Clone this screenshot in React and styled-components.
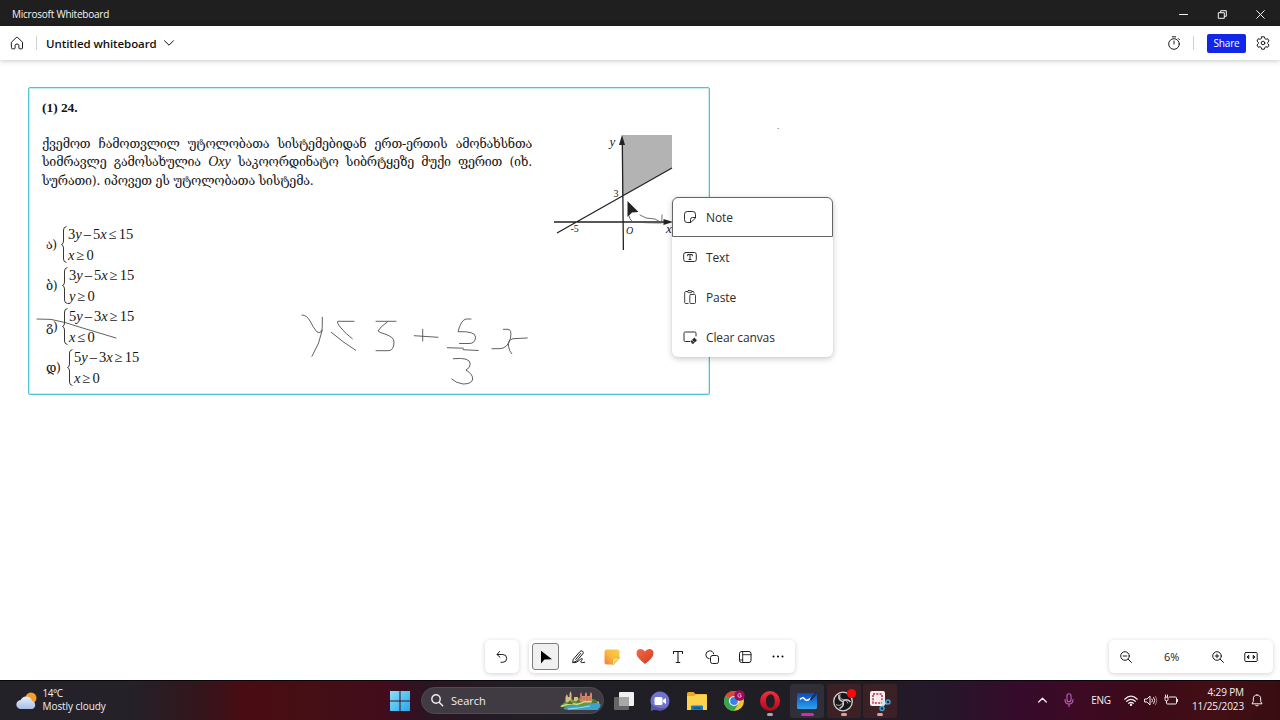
import React from "react";
import styled, { createGlobalStyle } from "styled-components";

const GlobalStyle = createGlobalStyle`
  * { box-sizing: border-box; }
  html, body { margin: 0; padding: 0; overflow: hidden; }
  body { font-family: "Open Sans", "Noto Sans", sans-serif; color: #1b1b1b; background: #fff; }
  svg { display: block; flex: none; overflow: visible; }
  button { font: inherit; color: inherit; border: 0; padding: 0; background: none; }
`;

const Screen = styled.div`
  width: 1280px;
  height: 720px;
  display: grid;
  grid-template-rows: 26px 34px 620px 40px;
  overflow: hidden;
`;

const Label = styled.span`
  white-space: nowrap;
  font-size: ${(p) => p.$size}px;
  letter-spacing: ${(p) => p.$track || 0}px;
  font-weight: ${(p) => p.$weight || 400};
`;

/* ---------- window title bar ---------- */
const TitleBar = styled.header`
  background: #1f1f1f;
  color: #f4f4f4;
  display: flex;
  align-items: center;
  justify-content: space-between;
  padding: 2px 0 0 12px;
`;
const WindowButtons = styled.div`
  display: flex;
`;
const WindowButton = styled.button`
  width: 38.5px;
  height: 24px;
  display: flex;
  align-items: center;
  justify-content: center;
`;

/* ---------- app header ---------- */
const AppHeader = styled.nav`
  position: relative;
  z-index: 1;
  background: #fff;
  display: flex;
  align-items: center;
  padding: 0 10px;
  box-shadow: 0 1px 5px rgba(0, 0, 0, 0.22);
`;
const Separator = styled.i`
  width: 1px;
  height: 14px;
  background: #d0d0d0;
  margin: 0 ${(p) => p.$right}px 0 ${(p) => p.$left}px;
`;
const BoardName = styled.div`
  display: flex;
  align-items: center;
  gap: 7px;
  color: #111;
  flex: 1;
`;
const ShareButton = styled.button`
  width: 39px;
  height: 19px;
  margin-right: 10px;
  border-radius: 2px;
  background: #1226e8;
  color: #fff;
  display: flex;
  align-items: center;
  justify-content: center;
`;

/* ---------- canvas ---------- */
const Canvas = styled.main`
  position: relative;
  background: #fff;
  overflow: hidden;
`;
const Worksheet = styled.article`
  position: absolute;
  left: 28px;
  top: 27px;
  width: 682px;
  height: 308px;
  border: 1px solid #50c3d6;
  box-shadow: inset 0 0 0 0.5px #8fdbe6;
  border-radius: 2px;
  padding: 12px 13px;
  display: grid;
  grid-template-columns: 490px 1fr;
  column-gap: 18px;
  color: #151515;
  font-family: "Liberation Serif", "DejaVu Serif", serif;
`;
const Problem = styled.section`
  display: flex;
  flex-direction: column;
`;
const ProblemNumber = styled.h1`
  margin: 0 0 19px;
  font-size: 13.5px;
  line-height: 16px;
  font-weight: 700;
  letter-spacing: -0.05px;
`;
const ProblemLine = styled.p`
  margin: 0;
  height: 18.4px;
  line-height: 18.4px;
  font-family: "DejaVu Serif", serif;
  font-size: 12.5px;
  letter-spacing: -0.22px;
  white-space: nowrap;
  text-align-last: ${(p) => (p.$last ? "left" : "justify")};
  em { font-family: "Liberation Serif", serif; font-size: 14px; letter-spacing: 0; }
`;
const Options = styled.div`
  margin-top: 34px;
  display: flex;
  flex-direction: column;
`;
const Option = styled.div`
  height: 41px;
  display: flex;
  align-items: center;
  padding-left: 4px;
`;
const OptionKey = styled.span`
  width: ${(p) => p.$width}px;
  font-family: "DejaVu Serif", serif;
  font-size: 12.5px;
  letter-spacing: -0.4px;
`;
const Equations = styled.div`
  display: flex;
  flex-direction: column;
  margin-left: 1px;
  font-size: 14.5px;
  line-height: 20.5px;
  white-space: nowrap;
`;
const Equation = styled.span`
  word-spacing: -1.6px;
`;
const Figure = styled.figure`
  margin: 0;
  padding-top: 28px;
`;
const Ink = styled.svg`
  position: absolute;
  left: 0;
  top: 0;
  pointer-events: none;
`;
const ContextMenu = styled.ul`
  position: absolute;
  left: 672px;
  top: 137px;
  width: 161px;
  margin: 0;
  padding: 0;
  list-style: none;
  background: #fff;
  border-radius: 6px;
  box-shadow: 0 2px 6px rgba(0, 0, 0, 0.2), 0 0 2px rgba(0, 0, 0, 0.1);
`;
const MenuItem = styled.li`
  height: 40px;
  display: flex;
  align-items: center;
  gap: 9px;
  padding-left: 10px;
  color: #2c2c2c;
  border: 1px solid ${(p) => (p.$focused ? "#666" : "transparent")};
  border-radius: ${(p) => (p.$focused ? "6px 6px 0 0" : "0")};
`;
const FloatingBar = styled.div`
  position: absolute;
  left: ${(p) => p.$left}px;
  top: 580px;
  width: ${(p) => p.$width}px;
  height: 33px;
  display: flex;
  align-items: center;
  background: #fff;
  border-radius: 5px;
  box-shadow: 0 1px 5px rgba(0, 0, 0, 0.18);
`;
const Tool = styled.button`
  width: ${(p) => p.$width || 33.2}px;
  height: 33px;
  display: flex;
  align-items: center;
  justify-content: center;
`;
const ActiveTool = styled.span`
  width: 27px;
  height: 27px;
  display: flex;
  align-items: center;
  justify-content: center;
  border: 1px solid #7c7c7c;
  border-radius: 3px;
  background: #f0f0f0;
`;

/* ---------- taskbar ---------- */
const Taskbar = styled.footer`
  display: flex;
  align-items: center;
  border-top: 1px solid #09070a;
  color: #f2eef0;
  background: linear-gradient(90deg, #242229 0, #242128 130px, #34151c 200px, #490c12 245px,
    #450f14 310px, #420c1d 385px, #2a1522 430px, #211e26 520px, #201e25 850px,
    #25172a 940px, #360b2b 1020px, #3d0a23 1080px, #3c0b18 1150px, #430f15 1210px, #380d12 1280px);
`;
const Weather = styled.div`
  width: 382px;
  padding-left: 16px;
  display: flex;
  align-items: center;
  gap: 4.5px;
`;
const Stack = styled.div`
  display: flex;
  flex-direction: column;
  align-items: ${(p) => p.$align || "flex-start"};
  line-height: 13.5px;
  margin-top: -1px;
  width: ${(p) => (p.$width ? p.$width + "px" : "auto")};
`;
const TaskIcon = styled.div`
  position: relative;
  width: ${(p) => p.$width || 36.67}px;
  height: 39px;
  display: flex;
  align-items: center;
  justify-content: center;
`;
const TaskTile = styled.div`
  width: 34px;
  height: 34px;
  display: flex;
  align-items: center;
  justify-content: center;
  border-radius: 3px;
  background: ${(p) => p.$fill || "transparent"};
`;
const RunningMark = styled.i`
  position: absolute;
  bottom: 4px;
  left: calc(50% - ${(p) => p.$width / 2}px);
  width: ${(p) => p.$width}px;
  height: 3px;
  border-radius: 2px;
  background: ${(p) => p.$color};
`;
const SearchBox = styled.div`
  width: 183px;
  height: 27px;
  margin: 0 1.5px 1px 3px;
  padding: 0 2px 0 9px;
  display: flex;
  align-items: center;
  gap: 8px;
  border: 1px solid #514a52;
  border-radius: 14px;
  background: #403b42;
  svg:last-child { margin-left: auto; }
`;
const Tray = styled.div`
  margin-left: auto;
  padding: 0 10px 1px 0;
  display: flex;
  align-items: center;
`;
const TrayCell = styled.div`
  width: ${(p) => p.$width}px;
  display: flex;
  justify-content: center;
`;

const Line = ({ w = 16, h = 16, sw = 1, children, color = "currentColor" }) => (
  <svg width={w} height={h} viewBox={`0 0 ${w} ${h}`} fill="none" stroke={color}
    strokeWidth={sw} strokeLinecap="round" strokeLinejoin="round">{children}</svg>
);

const HomeIcon = () => (
  <Line w={14} h={14}><path d="M1.500 6.200 6.200 1.600q.8-.7 1.600 0l4.700 4.600V12q0 .8-.8.8H9.600q-.7 0-.7-.8V9.600Q8.900 8 7 8T5.100 9.600V12q0 .8-.7.8H2.300q-.8 0-.8-.8z" /></Line>
);
const TimerIcon = () => (
  <Line w={14} h={14}><circle cx="7" cy="8" r="5.300" /><path d="M5.300.8h3.400M7 5v3M11.300 2.500l1.200 1.200" /></Line>
);
const GearIcon = () => (
  <Line w={14} h={14}>
    <path d="M5.700.8h2.600l.5 1.800 1.100.65 1.850-.5 1.300 2.250L11.700 6.350v1.300l1.350 1.350-1.300 2.250-1.850-.5-1.100.65-.5 1.800H5.700l-.5-1.800-1.100-.65-1.850.5L.95 9l1.350-1.350v-1.300L.95 5l1.300-2.250 1.850.5 1.100-.65z" />
    <circle cx="7" cy="7" r="1.800" />
  </Line>
);
const MENU = [
  ["Note", <Line w={14} h={14}><path d="M12.500 7.500V4.200q0-2.700-2.700-2.700H4.200q-2.700 0-2.700 2.700v5.600q0 2.700 2.700 2.700h3.300zM12.500 7.500H9.500q-2 0-2 2v3" /></Line>],
  ["Text", <Line w={14} h={14}><rect x=".7" y="2.500" width="12.600" height="9" rx="2" /><path d="M4.700 5.800V4.500h4.600v1.300M7 4.500v5M6 9.500h2" /></Line>],
  ["Paste", <Line w={14} h={14} sw={0.9}><path d="M4.500 1.500H2.700q-1 0-1 1v10q0 1 1 1h2.500M9 1.500h1q1 0 1 1v.7" /><rect x="4.500" y=".6" width="4.500" height="2" rx="1" /><rect x="6.800" y="4.500" width="5.700" height="9" rx="1" /></Line>],
  ["Clear canvas", <Line w={14} h={14}><path d="M7 11.500H2.200q-1.200 0-1.200-1.200V3.200Q1 2 2.200 2h9.600Q13 2 13 3.200V6" /><path d="m7.700 11.200 3.600-3.600 2.700 2.600-3.500 3.600H9z" fill="currentColor" stroke="none" /><path d="m9 10.200 2.300 2.300" stroke="#fff" strokeWidth=".6" /></Line>],
];

const UndoIcon = () => (
  <Line w={14} h={14}><path d="M4.500 1.500 2 4.500l3 2.700M2.200 4.500h5.500q4 0 4 3.900 0 3.900-4 3.900H6" /></Line>
);
const CursorIcon = () => (
  <svg width="14" height="14" viewBox="0 0 14 14"><path d="M2 .8v12.700l3.500-3.900L13 9.200z" fill="#000" /></svg>
);
const PenIcon = () => (
  <Line w={14} h={14}><path d="M1.500 9 8 1.500q1.200-1.300 2.600-.3 1.300 1.100.3 2.500L4.700 11 1 12.500zM3.700 9.500 8.700 3.500M1.500 12.700q2.500.6 5-1.800t3.700-2.300q.8.500-.8 2.100-1.300 1.800 0 1.900h1l2.300-.3" /></Line>
);
const StickyIcon = () => (
  <svg width="16" height="16" viewBox="0 0 16 16">
    <defs><linearGradient id="sticky" x1="0" y1="1" x2="1" y2="0"><stop offset="0" stopColor="#f07c3c" /><stop offset=".5" stopColor="#fab93e" /><stop offset="1" stopColor="#fbd042" /></linearGradient></defs>
    <path d="M3 .5h10q2.500 0 2.500 2.500v6.500l-6 6H3Q.5 15.500.5 13V3Q.5.5 3 .5z" fill="url(#sticky)" />
    <path d="M15.500 8.500H11q-2.500 0-2.500 2.500v4.500h1z" fill="#ffdc65" stroke="#eaa030" strokeWidth=".6" />
  </svg>
);
const HeartIcon = () => (
  <svg width="18" height="17" viewBox="0 0 18 17">
    <defs><linearGradient id="heart" x1="0" y1="0" x2="1" y2="1"><stop offset="0" stopColor="#f2694a" /><stop offset=".55" stopColor="#e2512f" /><stop offset="1" stopColor="#c9391f" /></linearGradient></defs>
    <path d="M9 16Q.5 9.500.5 5.500.5 1 4.700 1 7.500 1 9 3.500 10.500 1 13.300 1q4.200 0 4.200 4.500Q17.500 9.500 9 16z" fill="url(#heart)" />
  </svg>
);
const TextIcon = () => (
  <Line w={12} h={14} sw={1.100}><path d="M1.500 3.500v-2h9v2M6 1.500v11M4.200 12.500h3.600" /></Line>
);
const ShapesIcon = () => (
  <Line w={14} h={14}><path d="M4.200 8.800A4 4 0 1 1 8.700 3.800" /><rect x="5.500" y="5.500" width="8" height="8" rx="2" /></Line>
);
const TemplateIcon = () => (
  <Line w={14} h={14}><rect x="1.500" y="1.500" width="11.500" height="11" rx="2" /><path d="M4.700 1.500v11M4.700 4.700H13M2 10h2.700" strokeWidth=".9" /></Line>
);
const ZoomIcon = ({ plus }) => (
  <Line w={12} h={12}><circle cx="5" cy="5" r="4.300" /><path d={"M8.200 8.200l3.300 3.300M3.200 5h3.600" + (plus ? "M5 3.200v3.600" : "")} /></Line>
);
const FitIcon = () => (
  <Line w={14} h={12}><rect x=".8" y="1.500" width="12.400" height="9" rx="1" /><path d="M4.500 4.500 3 6l1.500 1.500zM9.500 4.500 11 6 9.500 7.500z" fill="currentColor" /></Line>
);

const Graph = () => (
  <svg width="126" height="128" viewBox="550 128 126 128" fontFamily="Liberation Serif, serif" fill="#222">
    <path d="M622 135h50v33l-50 28z" fill="#b3b3b3" />
    <g stroke="#222" strokeWidth="1.300" fill="none">
      <path d="M622.300 142 623.400 250M554 222h112M557 233 672 168" />
    </g>
    <path d="M622 135l-3 10h6zM673 222l-9.500-3v6z" />
    <text x="609.500" y="146" fontSize="13" fontStyle="italic">y</text>
    <text x="613.500" y="197" fontSize="10">3</text>
    <text x="570.500" y="232" fontSize="10">-5</text>
    <text x="626" y="234" fontSize="10" fontStyle="italic">O</text>
    <text x="666" y="232.500" fontSize="13" fontStyle="italic">x</text>
  </svg>
);
const Brace = () => (
  <svg width="6" height="37" viewBox="0 0 6 37" fill="none" stroke="#222" strokeWidth=".9">
    <path d="M5.500.5Q2.500 1 2.500 4v11q0 3-2 3.500 2 .5 2 3.500v11q0 3 3 3.500" />
  </svg>
);
const OPTIONS = [
  ["ა", 15, [["3", "y", " – 5", "x", " ≤ 15"], ["", "x", " ≥ 0"]]],
  ["ბ", 16, [["3", "y", " – 5", "x", " ≥ 15"], ["", "y", " ≥ 0"]]],
  ["გ", 16, [["5", "y", " – 3", "x", " ≥ 15"], ["", "x", " ≤ 0"]]],
  ["დ", 21, [["5", "y", " – 3", "x", " ≥ 15"], ["", "x", " ≥ 0"]]],
];

const WindowsLogo = () => (
  <svg width="20" height="20" viewBox="0 0 20 20"><defs><linearGradient id="win" x1="0" y1="0" x2="1" y2="1"><stop offset="0" stopColor="#8be0fb" /><stop offset="1" stopColor="#27a6ea" /></linearGradient></defs>
    <path d="M0 0h9.500v9.500H0zM10.500 0H20v9.500h-9.500zM0 10.500h9.500V20H0zM10.500 10.500H20V20h-9.500z" fill="url(#win)" /></svg>
);
const CastleArt = () => (
  <svg width="41" height="22" viewBox="0 0 41 22">
    <path d="M0 18q4-6 11-7l9-2 13 1q5 2 7 5l-2 4-14 1z" fill="#6f9440" />
    <path d="M3 19.500q9-5 17-1.500 10-4 20.500-3 .5 3-3 6H9q-4-.5-6-1.500z" fill="#39a4cf" />
    <path d="M1 17.500q9-4 16-2l8-3 14 1" stroke="#c4dc89" strokeWidth="1.500" fill="none" />
    <path d="M8 20q12-1 22-3" stroke="#9be0ef" fill="none" />
    <path d="M5.500 13V8l1.500-3 1 3h1.500V5l1-3 1 3v8zM14 12V8h4v4z" fill="#d8bd82" />
    <path d="M20 12V6l1-3 1 3v1h3V5l1-2 1 2v2h3V5l1-2 1 2v7z" fill="#d98a6c" />
    <path d="M21 6v5M24 8v3M27 7v5M30 8v3" stroke="#a65748" strokeWidth=".8" />
    <path d="M7 15l3-4 3 4zM16 13.500l2-3 3 3zM31 14l3-4 4 4z" fill="#4c7335" />
  </svg>
);
const TaskViewIcon = () => (
  <svg width="22" height="20" viewBox="0 0 22 20"><rect x="6" y="1" width="15" height="14" rx="1" fill="#f0f0f0" /><rect x="1" y="6" width="15" height="13" rx="1" fill="#6e6e6e" opacity=".9" /><path d="M6 6h10v9H6z" fill="#a8a8a8" /></svg>
);
const ChatIcon = () => (
  <svg width="20" height="20" viewBox="0 0 20 20"><path d="M10 .5a9.500 9.500 0 1 1-4.300 18L.8 19.500 1.600 14.500A9.500 9.500 0 0 1 10 .5z" fill="#7173cc" /><path d="M1.500 13Q8 19 17 16l-2 2q-4 2.500-9.300.5L.8 19.500z" fill="#5b53b0" /><rect x="4.500" y="6" width="8" height="8" rx="1.500" fill="#fff" /><path d="M13 9l3-2v6l-3-2z" fill="#fff" /></svg>
);
const FolderIcon = () => (
  <svg width="22" height="20" viewBox="0 0 22 20"><path d="M1 2.500Q1 1 2.500 1h5l2 2h10Q21 3 21 4.500V19H1z" fill="#e7aa22" /><path d="M1 5h7l2-1.500h11V19H1z" fill="#fbd34f" /><path d="M5 19v-3.500q0-1 1-1h10q1 0 1 1V19z" fill="#1a7cc5" /><path d="M7.500 17h7" stroke="#0b5490" strokeWidth="1.500" /></svg>
);
const ChromeIcon = () => (
  <svg width="22" height="22" viewBox="0 0 22 22"><circle cx="11" cy="11" r="10" fill="#f4c430" /><path d="M11 11 2.340 6A10 10 0 0 1 19.660 6z" fill="#df4536" /><path d="M11 11 2.340 6A10 10 0 0 0 11 21l4.500-7.500z" fill="#39a353" /><circle cx="11" cy="11" r="5" fill="#fff" /><circle cx="11" cy="11" r="3.900" fill="#3b82e6" /><circle cx="16.500" cy="5.500" r="5.200" fill="#a00a5a" /><path d="M18.200 4.200q-1.700-1.200-3 .1-1 1.700.4 2.800 1.500.7 2.600-.4V5.700h-1.500" stroke="#f0b9d5" strokeWidth=".9" fill="none" /></svg>
);
const OperaIcon = () => (
  <svg width="20" height="20" viewBox="0 0 20 20"><defs><linearGradient id="opera" x1="0" y1="0" x2="0" y2="1"><stop offset="0" stopColor="#f5303d" /><stop offset="1" stopColor="#b0081c" /></linearGradient></defs><path fillRule="evenodd" d="M10 0a10 10 0 1 1 0 20A10 10 0 0 1 10 0zM10.500 3.200C7.500 3.200 6 6.300 6 10s1.500 6.800 4.500 6.800 4.200-3.100 4.200-6.800-1.200-6.800-4.200-6.800z" fill="url(#opera)" /></svg>
);
const WhiteboardIcon = () => (
  <svg width="22" height="20" viewBox="0 0 22 20"><defs><linearGradient id="board" x1="0" y1="0" x2="0" y2="1"><stop offset="0" stopColor="#0d48c0" /><stop offset="1" stopColor="#2ba4ee" /></linearGradient></defs><rect x="1" y="2" width="20" height="16" rx="1.500" fill="url(#board)" /><path d="M4 8.500q2.500-3 4.500-.5t5 .2l1.500-1" stroke="#fff" strokeWidth="1.500" fill="none" /><path d="M13.500 8.500 19 1.500l2 1.500-5.500 6.500z" fill="#113463" /></svg>
);
const ObsIcon = () => (
  <svg width="24" height="24" viewBox="0 0 24 24" fill="none"><circle cx="11" cy="12.500" r="9.300" fill="#171719" stroke="#d4d0d0" strokeWidth="1.300" /><g stroke="#d4d0d0" strokeWidth="1.500"><path d="M11 12.500q-5-1-4-6.500M11 12.500q3.500-3.500 7.500.5M11 12.500q1.500 4.500-3.500 7" /><path d="M8 5q-1 5 3 5.500 4 0 5 4M4 15.500q4 2.500 7-2" strokeWidth=".8" /></g><circle cx="19.500" cy="4.500" r="4.600" fill="#f40b0b" /></svg>
);
const SnipIcon = () => (
  <svg width="22" height="22" viewBox="0 0 22 22" fill="none"><rect x="1" y="1" width="15" height="15" rx="2" fill="#f3eeee" /><rect x="4" y="4" width="9" height="9" stroke="#bc2c45" strokeWidth="1.500" strokeDasharray="2 1.300" /><path d="M10.500 10.500 18 14M14.500 9l-1 8" stroke="#d9e4ea" strokeWidth="1.700" /><circle cx="19" cy="12" r="2" stroke="#3ca1d4" strokeWidth="1.500" /><circle cx="13" cy="18.500" r="2" stroke="#3ca1d4" strokeWidth="1.500" /></svg>
);
const APPS = [
  { icon: <TaskViewIcon /> },
  { icon: <ChatIcon /> },
  { icon: <FolderIcon /> },
  { icon: <ChromeIcon /> },
  { icon: <OperaIcon />, mark: "#aaa6aa", width: 6 },
  { icon: <WhiteboardIcon />, fill: "#302e37", mark: "#cb2ac4", width: 13 },
  { icon: <ObsIcon />, fill: "#3b2025", mark: "#e59aa0", width: 6 },
  { icon: <SnipIcon />, fill: "#3b2025", mark: "#e59aa0", width: 6 },
];

export default function App() {
  return (
    <Screen>
      <GlobalStyle />
      <TitleBar>
        <Label $size={10} $track={-0.23}>Microsoft Whiteboard</Label>
        <WindowButtons>
          <WindowButton><Line w={9} h={9}><path d="M.5 4.500h8" /></Line></WindowButton>
          <WindowButton><Line w={9} h={9}><path d="M.7 2.700h5.600v5.600H.7zM2.700 2.500V.7h5.600v5.600H6.500" /></Line></WindowButton>
          <WindowButton><Line w={9} h={9}><path d="M.7.7l7.600 7.600M8.300.7.7 8.300" /></Line></WindowButton>
        </WindowButtons>
      </TitleBar>
      <AppHeader>
        <HomeIcon />
        <Separator $left={12} $right={9} />
        <BoardName>
          <Label $size={11.5} $weight={600} $track={-0.08}>Untitled whiteboard</Label>
          <Line w={10} h={6}><path d="M.5.7 5 5.200 9.500.7" /></Line>
        </BoardName>
        <TimerIcon />
        <Separator $left={12} $right={13} />
        <ShareButton><Label $size={10} $track={-0.15}>Share</Label></ShareButton>
        <GearIcon />
      </AppHeader>
      <Canvas>
        <Worksheet>
          <Problem>
            <ProblemNumber>(1) 24.</ProblemNumber>
            <ProblemLine>ქვემოთ ჩამოთვლილ უტოლობათა სისტემებიდან ერთ-ერთის ამონახსნთა</ProblemLine>
            <ProblemLine>სიმრავლე გამოსახულია <em>Oxy</em> საკოორდინატო სიბრტყეზე მუქი ფერით (იხ.</ProblemLine>
            <ProblemLine $last>სურათი). იპოვეთ ეს უტოლობათა სისტემა.</ProblemLine>
            <Options>
              {OPTIONS.map(([key, width, rows]) => (
                <Option key={key}>
                  <OptionKey $width={width}>{key})</OptionKey>
                  <Brace />
                  <Equations>
                    {rows.map((parts, i) => (
                      <Equation key={i}>{parts.map((part, j) => (j % 2 ? <i key={j}>{part}</i> : part))}</Equation>
                    ))}
                  </Equations>
                </Option>
              ))}
            </Options>
          </Problem>
          <Figure><Graph /></Figure>
        </Worksheet>
        <Ink width="1280" height="620" viewBox="0 60 1280 620" fill="none" stroke="#444" strokeWidth=".85" strokeLinecap="round" strokeLinejoin="round">
          <path d="M37 319q14-1 28 3.500T96 332l20 6" />
          <path d="M302 315Q307 315 310 321T316.700 331.700Q322.300 335 322.300 326V317.300M322.300 330Q320 343 312 356.300" />
          <path d="M354 321.300H338Q336 322 341 328T352.300 338.700M331.300 332.300Q341 341 355.700 350.300" />
          <path d="M376 321.300H396M387.300 322Q380 327 378 331 379 332.500 385 334 394 337 394 342 394 350.700 388 350.700H376" />
          <path d="M414.300 335.700 438 337.300M422.700 329.300V341" />
          <path d="M471 319H466Q461 320 458 331.700 475.500 331 475.500 337 475.500 343.500 469 343.500H459.500M447.300 347.700 463.300 348.200M463 349.700 478.300 350.500" />
          <path d="M453.300 358.700Q470.300 357 470.300 364 470 368 466 370 472.700 374 472.700 379 472 384 463 384 456 383 451.700 379" />
          <path d="M503.300 329.300H508Q512 329.500 510.500 338 508 348.700 499 348.700H492M527.300 338 513 338.700Q507.500 340 508.500 346 509 351 511.700 353.700" />
          <path d="M629 216q0 3 4 6 15 1 28 1 1 0 1-8M640 215l6 3 9 1 7 4M778 128.500h.3" stroke="#555" />
          <path d="M627.500 201v16l4.500-4.500 6.500-.5z" fill="#222" stroke="none" />
        </Ink>
        <ContextMenu>
          {MENU.map(([text, icon], i) => (
            <MenuItem key={text} $focused={i === 0}>{icon}<Label $size={12} $track={-0.12}>{text}</Label></MenuItem>
          ))}
        </ContextMenu>
        <FloatingBar $left={485} $width={34}><Tool $width={34}><UndoIcon /></Tool></FloatingBar>
        <FloatingBar $left={529} $width={266}>
          <Tool><ActiveTool><CursorIcon /></ActiveTool></Tool>
          <Tool><PenIcon /></Tool>
          <Tool><StickyIcon /></Tool>
          <Tool><HeartIcon /></Tool>
          <Tool><TextIcon /></Tool>
          <Tool><ShapesIcon /></Tool>
          <Tool><TemplateIcon /></Tool>
          <Tool><svg width="12" height="3" viewBox="0 0 12 3"><circle cx="1.500" cy="1.500" r="1" /><circle cx="6" cy="1.500" r="1" /><circle cx="10.500" cy="1.500" r="1" /></svg></Tool>
        </FloatingBar>
        <FloatingBar $left={1109} $width={164}>
          <Tool><ZoomIcon /></Tool>
          <Tool $width={59}><Label $size={11}>6%</Label></Tool>
          <Tool><ZoomIcon plus /></Tool>
          <Tool><FitIcon /></Tool>
        </FloatingBar>
      </Canvas>
      <Taskbar>
        <Weather>
          <svg width="22" height="18" viewBox="0 0 22 18"><defs><linearGradient id="cloud" x1="0" y1="0" x2="0" y2="1"><stop offset="0" stopColor="#eaf1fb" /><stop offset="1" stopColor="#a5bfe8" /></linearGradient></defs><circle cx="15" cy="6" r="5.500" fill="#f2a02b" /><path d="M5 17a4.500 4.500 0 0 1-.3-9A6 6 0 0 1 16 9a4.200 4.200 0 0 1 .5 8z" fill="url(#cloud)" /></svg>
          <Stack><Label $size={10} $track={-0.45}>14°C</Label><Label $size={10} $track={-0.06}>Mostly cloudy</Label></Stack>
        </Weather>
        <TaskIcon $width={36}><WindowsLogo /></TaskIcon>
        <SearchBox>
          <Line w={12} h={12} sw={1.400}><circle cx="5" cy="5" r="4.200" /><path d="m8.200 8.200 3.500 3.500" /></Line>
          <Label $size={11}>Search</Label>
          <CastleArt />
        </SearchBox>
        {APPS.map((app, i) => (
          <TaskIcon key={i}>
            <TaskTile $fill={app.fill}>{app.icon}</TaskTile>
            {app.mark && <RunningMark $color={app.mark} $width={app.width} />}
          </TaskIcon>
        ))}
        <Tray>
          <TrayCell $width={26}><Line w={9} h={6} sw={1.300}><path d="M.7 5 4.500 1.200 8.300 5" /></Line></TrayCell>
          <TrayCell $width={28}><Line w={10} h={14} color="#bf63bd" sw={1.100}><rect x="3" y=".7" width="4" height="8" rx="2" /><path d="M1 6.500q0 4.500 4 4.500t4-4.500M5 11v2.500" /></Line></TrayCell>
          <TrayCell $width={36}><Label $size={10} $track={-0.25}>ENG</Label></TrayCell>
          <TrayCell $width={23}><Line w={14} h={11} sw={1.200}><path d="M.7 4.200q6.300-6 12.600 0M2.700 6.300q4.300-4 8.600 0M4.700 8.300q2.300-2 4.600 0" /><circle cx="7" cy="9.800" r=".6" fill="#fff" /></Line></TrayCell>
          <TrayCell $width={17}><Line w={13} h={11}><path d="M1 4h2L6 1v9L3 7H1zM8 4q1.200 1.500 0 3M9.700 2.500q2.300 3 0 6" /><path d="M11.300 1.200q3 4.300 0 8.600" opacity=".5" /></Line></TrayCell>
          <TrayCell $width={23}><Line w={14} h={12}><path d="M5.500 3h6q1 0 1 1v5q0 1-1 1h-8q-1 0-1-1V7M13.500 5.500v2M1 3.500v2q0 1.500 1.500 1.500T4 5.500v-2zM1.500 3V1M3.500 3V1" /></Line></TrayCell>
          <Stack $width={62} $align="flex-end"><Label $size={10} $track={-0.12}>4:29 PM</Label><Label $size={10} $track={-0.1}>11/25/2023</Label></Stack>
          <TrayCell $width={26}><Line w={12} h={13}><path d="M6 1q3.700 0 3.700 4v2.500l1.300 2.300H1l1.300-2.300V5Q2.300 1 6 1zM4.700 11.500q1.300 1.200 2.600 0" /></Line></TrayCell>
        </Tray>
      </Taskbar>
    </Screen>
  );
}
